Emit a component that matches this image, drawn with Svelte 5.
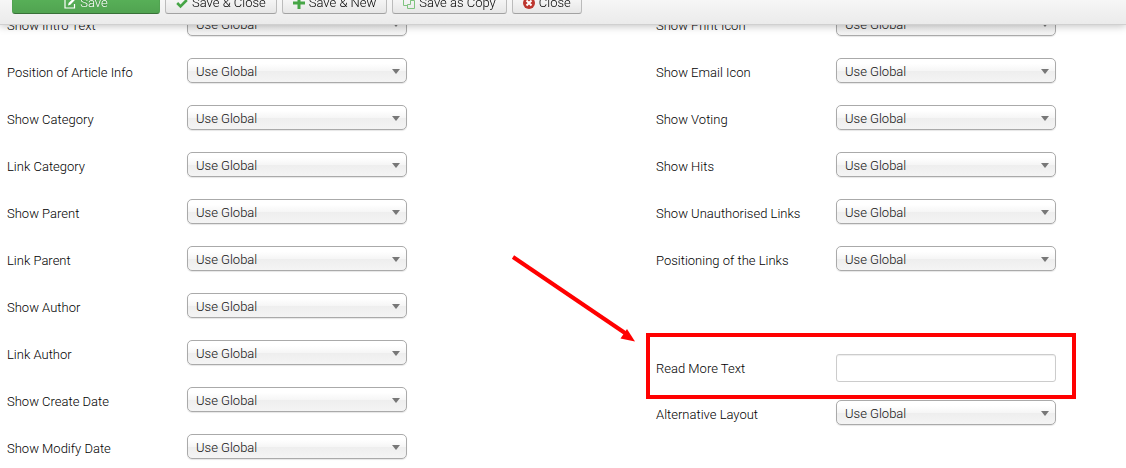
<script lang="ts">
  type Field = {
    id: string;
    label: string;
    type: 'list' | 'text' | 'spacer';
  };

  const leftFields: Field[] = [
    { id: 'show_intro', label: 'Show Intro Text', type: 'list' },
    { id: 'info_block_position', label: 'Position of Article Info', type: 'list' },
    { id: 'show_category', label: 'Show Category', type: 'list' },
    { id: 'link_category', label: 'Link Category', type: 'list' },
    { id: 'show_parent_category', label: 'Show Parent', type: 'list' },
    { id: 'link_parent_category', label: 'Link Parent', type: 'list' },
    { id: 'show_author', label: 'Show Author', type: 'list' },
    { id: 'link_author', label: 'Link Author', type: 'list' },
    { id: 'show_create_date', label: 'Show Create Date', type: 'list' },
    { id: 'show_modify_date', label: 'Show Modify Date', type: 'list' }
  ];

  const rightFields: Field[] = [
    { id: 'show_print_icon', label: 'Show Print Icon', type: 'list' },
    { id: 'show_email_icon', label: 'Show Email Icon', type: 'list' },
    { id: 'show_vote', label: 'Show Voting', type: 'list' },
    { id: 'show_hits', label: 'Show Hits', type: 'list' },
    { id: 'show_noauth', label: 'Show Unauthorised Links', type: 'list' },
    { id: 'urls_position', label: 'Positioning of the Links', type: 'list' },
    { id: 'spacer', label: '', type: 'spacer' },
    { id: 'alternative_readmore', label: 'Read More Text', type: 'text' },
    { id: 'article_layout', label: 'Alternative Layout', type: 'list' }
  ];

  let readMore = $state('');
</script>

<div class="subhead">
  <button type="button" class="btn btn-success">
    <svg class="icon" viewBox="0 0 12 12">
      <path d="M8 1.5H1v9.5h9.5V7" fill="none" stroke="#fff" stroke-width="1.2" />
      <path d="M4 8.5l.6-2.4L10 .7l1.6 1.6-5.3 5.5z" fill="#fff" />
    </svg>
    Save
  </button>
  <button type="button" class="btn">
    <svg class="icon" viewBox="0 0 12 12">
      <path d="M1.2 6l3.3 3.3L10.8 3" fill="none" stroke="#46a546" stroke-width="2.6" />
    </svg>
    Save &amp; Close
  </button>
  <button type="button" class="btn">
    <svg class="icon" viewBox="0 0 12 12">
      <path d="M6 0v12M0 6h12" stroke="#46a546" stroke-width="3" />
    </svg>
    Save &amp; New
  </button>
  <button type="button" class="btn">
    <svg class="icon" viewBox="0 0 12 12" fill="none" stroke="#80c380">
      <path d="M4.5 8.5h-4v-8h7v3" />
      <path d="M7.5 3.5h4v8h-7v-4h3z" />
    </svg>
    Save as Copy
  </button>
  <button type="button" class="btn">
    <svg class="icon" viewBox="0 0 12 12">
      <circle cx="6" cy="6" r="6" fill="#bd362f" />
      <path d="M3.5 3.5l5 5M8.5 3.5l-5 5" stroke="#fff" stroke-width="2" />
    </svg>
    Close
  </button>
</div>

{#snippet controlGroup(field: Field)}
  {#if field.type === 'spacer'}
    <div class="spacer"></div>
  {:else if field.type === 'text'}
    <div class="control-group text-group">
      <label for={field.id}>{field.label}</label>
      <input id={field.id} type="text" bind:value={readMore} />
      <div class="highlight"></div>
      <svg class="arrow" viewBox="0 0 124 88">
        <path d="M2 3L114 79" stroke="#f00" stroke-width="4" />
        <path d="M124 87.500L109.500 84.500L116 75z" fill="#f00" />
      </svg>
    </div>
  {:else}
    <div class="control-group">
      <label for={field.id}>{field.label}</label>
      <div class="chosen">
        <select id={field.id}>
          <option>Use Global</option>
          <option>Hide</option>
          <option>Show</option>
        </select>
      </div>
    </div>
  {/if}
{/snippet}

<form class="options">
  <div class="column">
    {#each leftFields as field (field.id)}
      {@render controlGroup(field)}
    {/each}
  </div>
  <div class="column">
    {#each rightFields as field (field.id)}
      {@render controlGroup(field)}
    {/each}
  </div>
</form>

<style>
  :global(body) {
    background: #fff;
    overflow: hidden;
  }

  .subhead,
  .options {
    font-family: Roboto, 'Liberation Sans', sans-serif;
    font-size: 13px;
    font-weight: 300;
    line-height: 18px;
    color: #000;
  }

  .subhead {
    position: fixed;
    top: -20px;
    left: 0;
    right: 0;
    z-index: 10;
    display: flex;
    gap: 5px;
    padding: 10px 12px;
    background: linear-gradient(#fff, #ebebeb);
    border-bottom: 1px solid #d0d0d0;
    box-shadow: 0 1px 8px rgba(0, 0, 0, 0.25);
  }

  .btn {
    display: flex;
    align-items: center;
    justify-content: center;
    gap: 4px;
    height: 24px;
    padding: 2px 10px 0;
    box-sizing: border-box;
    border: 1px solid #bbb;
    border-bottom-color: #a2a2a2;
    border-radius: 3px;
    background: linear-gradient(#fff, #e6e6e6);
    color: #000;
    font: inherit;
    white-space: nowrap;
    cursor: pointer;
  }

  .btn-success {
    width: 148px;
    border-color: #51a351;
    border-bottom-color: #387038;
    background: linear-gradient(#5bb75b, #51a351);
    color: #fff;
    text-shadow: 0 -1px 0 rgba(0, 0, 0, 0.25);
  }

  .icon {
    width: 12px;
    height: 12px;
  }

  .options {
    display: grid;
    grid-template-columns: 58fr 42fr;
    padding: 11px 0 0 7px;
  }

  .control-group {
    display: flex;
    align-items: flex-start;
    min-height: 29px;
    margin-bottom: 18px;
  }

  .control-group label {
    width: 180px;
    padding-top: 6px;
  }

  .text-group {
    position: relative;
    width: 400px;
    min-height: 28px;
  }

  .spacer {
    height: 43px;
    margin-bottom: 18px;
  }

  .chosen {
    position: relative;
    width: 220px;
  }

  .chosen::after {
    content: '';
    position: absolute;
    top: 11px;
    right: 7px;
    border: 4px solid transparent;
    border-top: 5px solid #777;
    border-bottom: 0;
    pointer-events: none;
  }

  select {
    display: block;
    width: 100%;
    height: 25px;
    padding: 2px 8px 0;
    appearance: none;
    border: 1px solid #aaa;
    border-radius: 5px;
    background: linear-gradient(#fff 20%, #f6f6f6 50%, #eee 52%, #f4f4f4 100%);
    box-shadow: 0 1px 1px rgba(0, 0, 0, 0.1);
    color: #111;
    font: inherit;
  }

  input {
    width: 220px;
    height: 28px;
    padding: 4px 6px;
    box-sizing: border-box;
    border: 1px solid #ccc;
    border-radius: 3px;
    box-shadow: inset 0 1px 1px rgba(0, 0, 0, 0.075);
    color: #555;
    font: inherit;
  }

  .highlight {
    position: absolute;
    inset: -21px -20px -17px -10px;
    border: 4px solid #f00;
    pointer-events: none;
  }

  .arrow {
    position: absolute;
    top: -100px;
    left: -145px;
    width: 124px;
    height: 88px;
    pointer-events: none;
  }
</style>
